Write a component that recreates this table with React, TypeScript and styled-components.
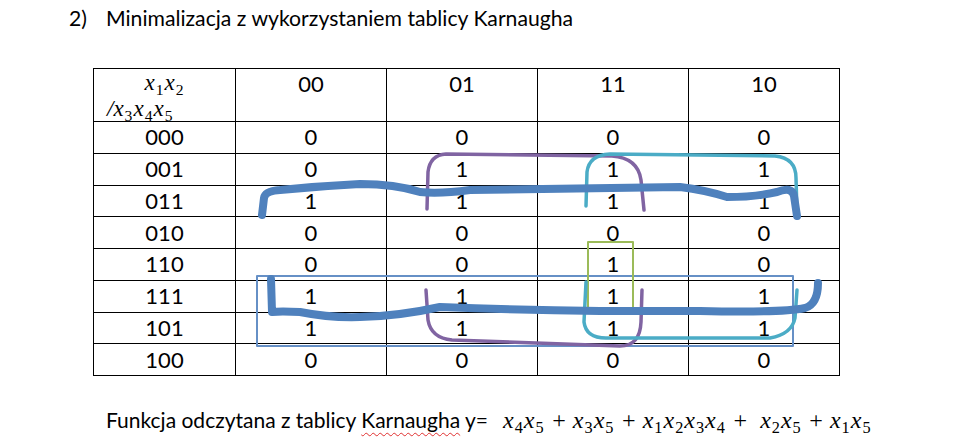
import React from "react";
import styled, { createGlobalStyle } from "styled-components";

const GlobalStyle = createGlobalStyle`
  html, body {
    margin: 0;
    padding: 0;
    background: #ffffff;
  }
  body {
    font-family: Lato, "Open Sans", sans-serif;
    color: #000000;
  }
`;

const Page = styled.div`
  width: 962px;
  height: 441px;
  overflow: hidden;
  position: relative;
`;

const Heading = styled.h2`
  display: flex;
  margin: 0;
  padding: 5px 0 0 69px;
  font-size: 21.2px;
  font-weight: 400;
  line-height: 26px;
`;

const HeadingNumber = styled.span`
  width: 37px;
`;

const TableWrap = styled.div`
  position: relative;
  width: 742px;
  margin: 37px 0 0 93px;
`;

const KTable = styled.table`
  border-collapse: collapse;
  table-layout: fixed;
  width: 742px;
  font-size: 22px;
`;

const HeadRow = styled.tr`
  height: 53px;
`;

const HeadCell = styled.th<{ $wide?: boolean }>`
  width: ${({ $wide }) => ($wide ? "141px" : "150px")};
  border: 1px solid #000;
  padding: 3px 0 0;
  vertical-align: top;
  font-weight: 400;
  text-align: center;
  line-height: 24px;
`;

const CornerCell = styled(HeadCell)`
  padding: 0;
  text-align: left;
`;

const CornerLine = styled.div<{ $indent?: boolean }>`
  height: 26px;
  line-height: 26px;
  text-align: ${({ $indent }) => ($indent ? "left" : "center")};
  padding-left: ${({ $indent }) => ($indent ? "13px" : "0")};
  white-space: nowrap;
`;

const Row = styled.tr`
  height: 31.75px;
`;

const Cell = styled.td`
  border: 1px solid #000;
  padding: 0;
  text-align: center;
  vertical-align: middle;
  line-height: 22px;
`;

const Math = styled.span<{ $gap?: boolean; $small?: boolean }>`
  font-family: "Liberation Serif", "DejaVu Serif", serif;
  font-style: italic;
  font-size: ${({ $small }) => ($small ? "23px" : "24px")};
  line-height: 1;
  white-space: pre;
  margin-left: ${({ $gap }) => ($gap ? "15px" : "0")};
`;

const Sub = styled.sub`
  font-style: normal;
  font-size: 0.68em;
  vertical-align: -0.3em;
  line-height: 0;
  margin: 0 1px;
`;

const Overlay = styled.svg`
  position: absolute;
  left: 0;
  top: 0;
  overflow: visible;
  pointer-events: none;
`;

const Footer = styled.p`
  margin: 31px 0 0 106px;
  font-size: 21px;
  line-height: 26px;
  white-space: nowrap;
`;

const Misspelled = styled.span`
  text-decoration: underline wavy #e03030;
  text-decoration-thickness: 1px;
  text-underline-offset: 4px;
`;

const columns = ["00", "01", "11", "10"];

const rows: { label: string; values: number[] }[] = [
  { label: "000", values: [0, 0, 0, 0] },
  { label: "001", values: [0, 1, 1, 1] },
  { label: "011", values: [1, 1, 1, 1] },
  { label: "010", values: [0, 0, 0, 0] },
  { label: "110", values: [0, 0, 1, 0] },
  { label: "111", values: [1, 1, 1, 1] },
  { label: "101", values: [1, 1, 1, 1] },
  { label: "100", values: [0, 0, 0, 0] },
];

// variable with subscript, e.g. x₃
const X = ({ n }: { n: number }) => (
  <>
    x<Sub>{n}</Sub>
  </>
);

const Term = ({ vars }: { vars: number[] }) => (
  <>
    {vars.map((v) => (
      <X key={v} n={v} />
    ))}
  </>
);

const terms = [[4, 5], [3, 5], [1, 2, 3, 4], [2, 5], [1, 5]];

// hand-drawn groupings, in page coordinates
const Groupings = () => (
  <Overlay width={742} height={309} viewBox="93 68 742 309">
    <g fill="none" strokeLinecap="round" strokeLinejoin="round">
      {/* thin blue frame around rows 111 / 101 */}
      <rect x={257} y={276} width={536} height={70} stroke="#6690c6" strokeWidth={2} />
      {/* green frame, column 11 rows 110 / 111 */}
      <rect x={588} y={242} width={45} height={69} stroke="#9bbb59" strokeWidth={2} />

      {/* purple */}
      <path d="M427 209 L428 172 Q430 155 446 154 L612 156 Q638 158 641 180 L644 210" stroke="#8064a2" strokeWidth={3.5} />
      <path d="M426 290 L428 320 Q431 338 452 340 L620 346 Q640 346 641 322 L642 290" stroke="#8064a2" strokeWidth={3.5} />

      {/* cyan */}
      <path d="M586 206 L587 172 Q589 155 610 154 L775 156 Q796 158 796 178 L797 212" stroke="#4bacc6" strokeWidth={3.5} />
      <path d="M586 282 L584 322 Q586 338 606 338 L770 338 Q792 334 795 318 L797 290" stroke="#4bacc6" strokeWidth={3.5} />

      {/* thick blue */}
      <path
        d="M262 215 L264 198 Q265 191 280 190 Q320 186 360 184 Q395 184 420 192 Q440 194 470 190 L680 187 Q705 190 727 197 Q755 197 777 192 Q792 186 794 196 L797 216"
        stroke="#4f81bd"
        strokeWidth={8}
      />
      <path
        d="M271 279 L272 312 Q280 311 300 312 Q330 318 360 317 Q400 316 440 307 Q520 310 600 311 L700 311 Q780 313 805 308 Q818 304 818 283"
        stroke="#4f81bd"
        strokeWidth={8}
      />
    </g>
  </Overlay>
);

const App: React.FC = () => {
  return (
    <Page>
      <GlobalStyle />
      <Heading>
        <HeadingNumber>2)</HeadingNumber>
        Minimalizacja z wykorzystaniem tablicy Karnaugha
      </Heading>

      <TableWrap>
        <KTable>
          <thead>
            <HeadRow>
              <CornerCell $wide>
                <CornerLine>
                  <Math $small>
                    <Term vars={[1, 2]} />
                  </Math>
                </CornerLine>
                <CornerLine $indent>
                  <Math $small>
                    /<Term vars={[3, 4, 5]} />
                  </Math>
                </CornerLine>
              </CornerCell>
              {columns.map((c) => (
                <HeadCell key={c}>{c}</HeadCell>
              ))}
            </HeadRow>
          </thead>
          <tbody>
            {rows.map((r) => (
              <Row key={r.label}>
                <Cell>{r.label}</Cell>
                {r.values.map((v, i) => (
                  <Cell key={i}>{v}</Cell>
                ))}
              </Row>
            ))}
          </tbody>
        </KTable>
        <Groupings />
      </TableWrap>

      <Footer>
        Funkcja odczytana z tablicy <Misspelled>Karnaugha</Misspelled> y=
        <Math $gap>
          {terms.map((t, i) => (
            <React.Fragment key={i}>
              {i > 0 && (i === 3 ? " +  " : " + ")}
              <Term vars={t} />
            </React.Fragment>
          ))}
        </Math>
      </Footer>
    </Page>
  );
};

export default App;
